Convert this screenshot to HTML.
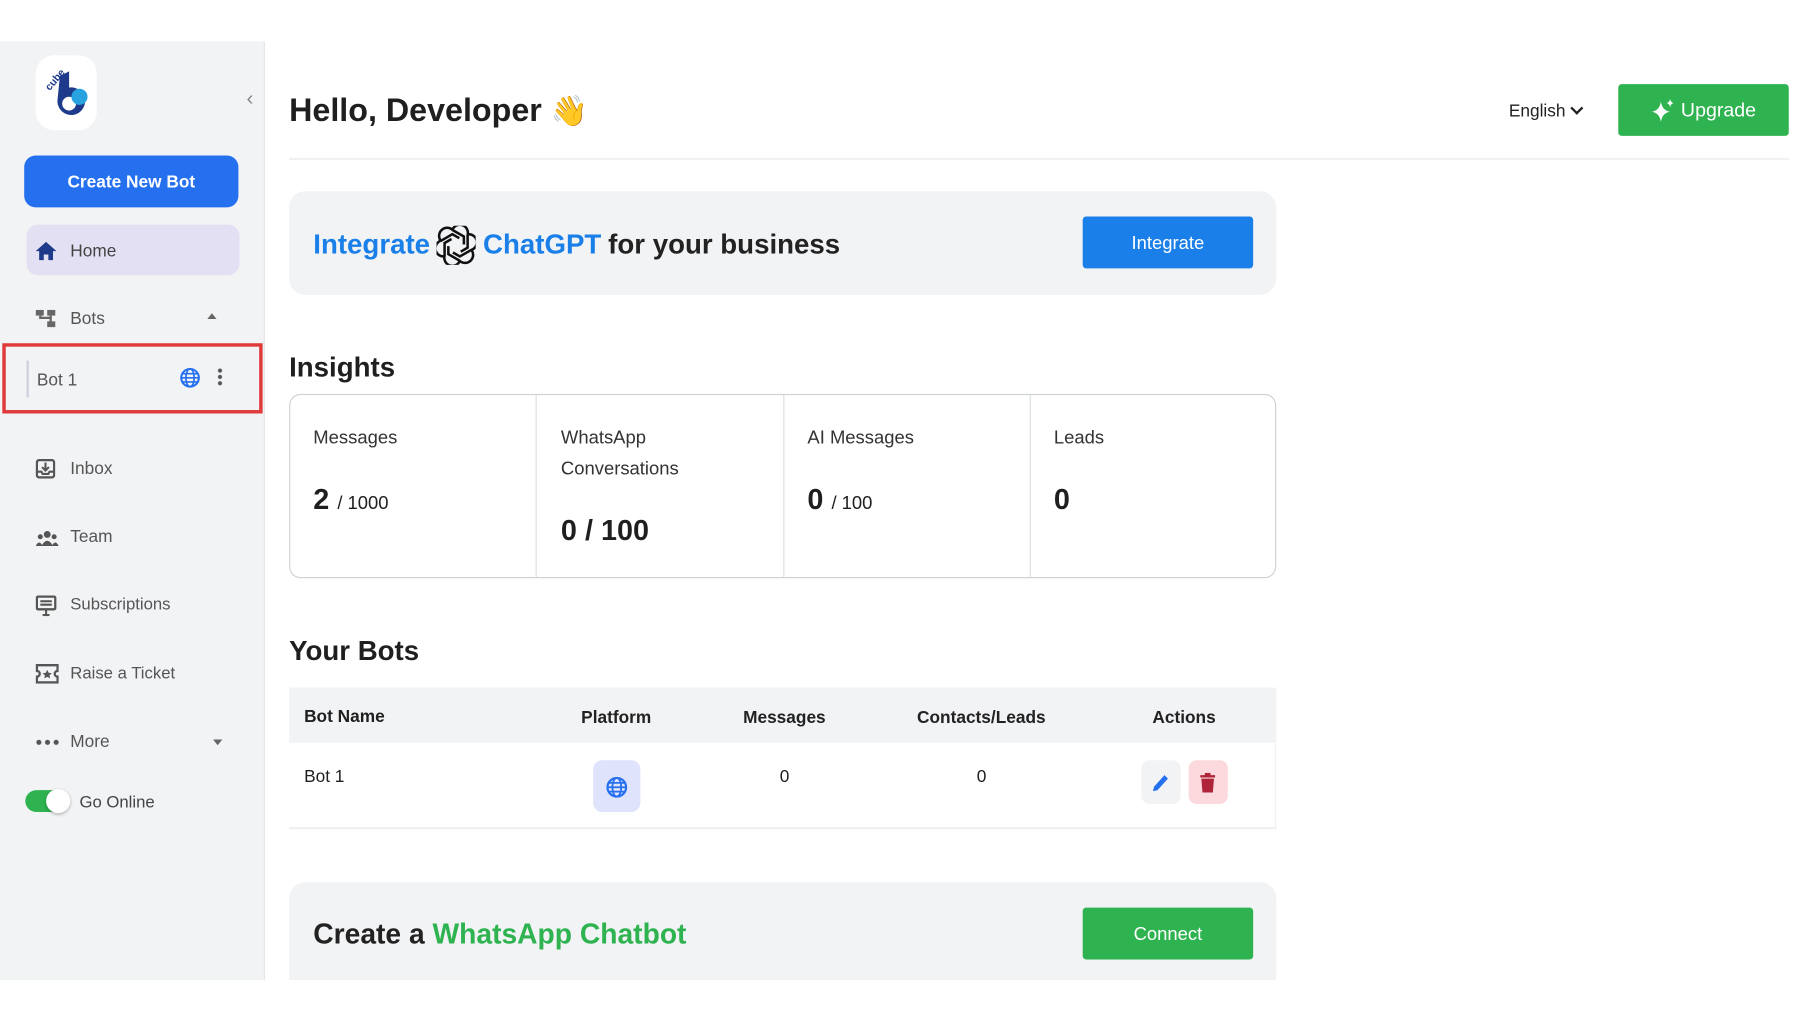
<!DOCTYPE html>
<html><head><meta charset="utf-8"><style>
*{margin:0;padding:0;box-sizing:border-box}
html,body{width:1806px;height:1020px;overflow:hidden;background:#fff;font-family:"Liberation Sans",sans-serif;color:#1f1f1f}
#w{position:absolute;left:0;top:0;width:1568px;height:886px;transform:scale(1.1518);transform-origin:0 0}
.a{position:absolute}
.side{left:0;top:36px;width:230px;height:815px;background:#f2f3f5;border-right:1px solid #e6e6e8}
.nav{position:absolute;left:61px;font-size:15px;color:#555;transform:translateY(-50%)}
.ic{position:absolute;left:31px;transform:translateY(-50%)}
.h2{font-size:25px;font-weight:bold;color:#1f1f1f}
.lbl{font-size:16px;color:#333}
.th{position:absolute;top:622px;font-size:15px;font-weight:bold;color:#222;transform:translate(-50%,-50%)}
</style></head><body><div id="w">
<div class="a side"></div>
<div class="a" style="left:31px;top:48px;width:53px;height:65px;background:#fff;border-radius:16px"></div>
<svg class="a" style="left:36px;top:56px" width="44" height="50" viewBox="0 0 44 50"><text x="2" y="20" font-size="9" font-weight="bold" fill="#1e3a8a" transform="rotate(-50 8 16)" font-family="Liberation Sans">cube</text><path d="M16 10 L24 6 L24 20 A12 12 0 1 1 14 30 Z" fill="#1e3a8a"/><circle cx="24" cy="34" r="6" fill="#fff"/><circle cx="33" cy="28" r="7" fill="#29a3e0"/></svg>
<div class="a" style="left:214px;top:75px;font-size:18px;color:#888">‹</div>
<div class="a" style="left:21px;top:135px;width:186px;height:45px;background:#2570ef;border-radius:10px;color:#fff;font-size:15px;font-weight:bold;display:flex;align-items:center;justify-content:center;padding-top:2px">Create New Bot</div>
<div class="a" style="left:23px;top:195px;width:185px;height:44px;background:#e4e0f3;border-radius:10px"></div>
<svg class="ic" style="top:218px" width="18" height="16" viewBox="0 0 18 16"><path d="M9 0 L18 8 H15 V16 H11 V11 H7 V16 H3 V8 H0Z" fill="#1e3a8a"/></svg>
<div class="nav" style="top:218px;color:#444">Home</div>
<svg class="ic" style="top:277px" width="18" height="16" viewBox="0 0 18 16"><rect x="0" y="0" width="7" height="5" fill="#666"/><rect x="10" y="0" width="7" height="5" fill="#666"/><rect x="10" y="10" width="7" height="5" fill="#666"/><path d="M13 5 V12 M4 5 V7 H13" stroke="#666" stroke-width="2" fill="none"/></svg>
<div class="nav" style="top:277px">Bots</div>
<div class="a" style="left:180px;top:272px;width:0;height:0;border-left:4px solid transparent;border-right:4px solid transparent;border-bottom:5px solid #666"></div>
<div class="a" style="left:2px;top:298px;width:226px;height:61px;border:3px solid #e03a3a"></div>
<div class="a" style="left:23px;top:313px;width:2px;height:32px;background:#cdd2de"></div>
<div class="nav" style="left:32px;top:330px">Bot 1</div>
<svg class="a" style="left:156px;top:319px" width="18" height="18" viewBox="0 0 20 20"><circle cx="10" cy="10" r="8.5" fill="none" stroke="#2570ef" stroke-width="2"/><ellipse cx="10" cy="10" rx="4" ry="8.5" fill="none" stroke="#2570ef" stroke-width="1.6"/><path d="M1.5 10H18.5M3 6H17M3 14H17" stroke="#2570ef" stroke-width="1.6"/></svg>
<div class="a" style="left:189px;top:319px;width:4px;height:16px;background:radial-gradient(circle,#555 1.6px,transparent 2px) 0 0/4px 5.5px"></div>
<svg class="ic" style="top:407px" width="17" height="17" viewBox="0 0 17 17"><rect x="1" y="1" width="15" height="15" rx="2" fill="none" stroke="#555" stroke-width="2"/><path d="M8.5 3V10M5.5 7L8.5 10L11.5 7M1 11H5L6 13H11L12 11H16" stroke="#555" stroke-width="1.8" fill="none"/></svg>
<div class="nav" style="top:407px">Inbox</div>
<svg class="ic" style="top:467px" width="20" height="14" viewBox="0 0 20 14"><circle cx="10" cy="4" r="3" fill="#555"/><circle cx="4" cy="6" r="2.2" fill="#555"/><circle cx="16" cy="6" r="2.2" fill="#555"/><path d="M5 14Q10 5 15 14Z M0 14Q3 8 6 14Z M14 14Q17 8 20 14Z" fill="#555"/></svg>
<div class="nav" style="top:466px">Team</div>
<svg class="ic" style="top:526px" width="18" height="18" viewBox="0 0 18 18"><rect x="1" y="1" width="16" height="11" rx="1" fill="none" stroke="#555" stroke-width="2"/><path d="M6 17H12M9 12V17M4 5H14M4 8H14" stroke="#555" stroke-width="1.8"/></svg>
<div class="nav" style="top:525px;font-size:14.5px">Subscriptions</div>
<svg class="ic" style="top:585px" width="20" height="17" viewBox="0 0 20 17"><path d="M1 1H19V6A2.5 2.5 0 0 0 19 11V16H1V11A2.5 2.5 0 0 0 1 6Z" fill="none" stroke="#555" stroke-width="2"/><path d="M10 5L11.2 7.6L14 8L12 9.8L12.5 12.5L10 11.2L7.5 12.5L8 9.8L6 8L8.8 7.6Z" fill="#555"/></svg>
<div class="nav" style="top:585px;font-size:14.5px">Raise a Ticket</div>
<div class="a" style="left:30px;top:642px;width:22px;height:5px;background:radial-gradient(circle,#555 2px,transparent 2.4px) 0 0/7.5px 5px"></div>
<div class="nav" style="top:644px">More</div>
<div class="a" style="left:185px;top:642px;width:0;height:0;border-left:4px solid transparent;border-right:4px solid transparent;border-top:5px solid #666"></div>
<div class="a" style="left:22px;top:686px;width:37px;height:19px;background:#2eb350;border-radius:10px"></div>
<div class="a" style="left:40px;top:685px;width:21px;height:21px;background:#fff;border-radius:50%;box-shadow:0 1px 3px rgba(0,0,0,.3)"></div>
<div class="nav" style="left:69px;top:697px;color:#444;font-size:14.5px">Go Online</div>

<div class="a" style="left:251px;top:80px;font-size:28px;font-weight:bold;color:#1f1f1f">Hello, Developer <span style="font-size:26px">👋</span></div>
<div class="a" style="left:1310px;top:88px;font-size:15px;color:#222">English <span style="display:inline-block;width:8px;height:8px;border-right:2px solid #222;border-bottom:2px solid #222;transform:rotate(45deg);margin:0 0 3px 2px"></span></div>
<div class="a" style="left:1405px;top:73px;width:148px;height:45px;background:#2eb350;border-radius:3px;color:#fff;font-size:17px;display:flex;align-items:center;justify-content:center;gap:4px"><svg width="22" height="22" viewBox="0 0 22 22"><path d="M9 3Q10 11 17 12Q10 13 9 21Q8 13 1 12Q8 11 9 3Z M17 1Q17.5 4 20 4.5Q17.5 5 17 8Q16.5 5 14 4.5Q16.5 4 17 1Z" fill="#fff"/></svg>Upgrade</div>
<div class="a" style="left:251px;top:137px;width:1302px;height:2px;background:#f0f1f3"></div>

<div class="a" style="left:251px;top:166px;width:857px;height:90px;background:#f2f3f5;border-radius:14px"></div>
<div class="a" style="left:272px;top:196px;font-size:24px;font-weight:bold;color:#222;display:flex;align-items:center;gap:6px"><span style="color:#1a7fe8">Integrate</span><svg width="34" height="34" viewBox="0 0 34 34" fill="none" stroke="#111" stroke-width="2.2"><g transform="translate(17 17)"><path id="p" d="M-3 -14 A7 7 0 0 1 10 -9 L10 2 L4 5.5"/><use href="#p" transform="rotate(60)"/><use href="#p" transform="rotate(120)"/><use href="#p" transform="rotate(180)"/><use href="#p" transform="rotate(240)"/><use href="#p" transform="rotate(300)"/></g></svg><span style="color:#1a7fe8">ChatGPT</span> for your business</div>
<div class="a" style="left:940px;top:188px;width:148px;height:45px;background:#1a7fe8;border-radius:3px;color:#fff;font-size:16px;display:flex;align-items:center;justify-content:center;padding-top:2px">Integrate</div>

<div class="a h2" style="left:251px;top:306px;font-size:24px">Insights</div>
<div class="a" style="left:251px;top:342px;width:857px;height:160px;border:1px solid #cfd2d6;border-radius:10px"></div>
<div class="a" style="left:465px;top:343px;width:1px;height:158px;background:#dcdee2"></div>
<div class="a" style="left:680px;top:343px;width:1px;height:158px;background:#dcdee2"></div>
<div class="a" style="left:894px;top:343px;width:1px;height:158px;background:#dcdee2"></div>
<div class="a lbl" style="left:272px;top:372px">Messages</div>
<div class="a" style="left:272px;top:420px;font-size:25px;font-weight:bold">2 <span style="font-size:16px;font-weight:normal">/ 1000</span></div>
<div class="a lbl" style="left:487px;top:367px;line-height:27px">WhatsApp<br>Conversations</div>
<div class="a" style="left:487px;top:447px;font-size:25px;font-weight:bold">0 / 100</div>
<div class="a lbl" style="left:701px;top:372px">AI Messages</div>
<div class="a" style="left:701px;top:420px;font-size:25px;font-weight:bold">0 <span style="font-size:16px;font-weight:normal">/ 100</span></div>
<div class="a lbl" style="left:915px;top:372px">Leads</div>
<div class="a" style="left:915px;top:420px;font-size:25px;font-weight:bold">0</div>

<div class="a h2" style="left:251px;top:552px;font-size:24px">Your Bots</div>
<div class="a" style="left:251px;top:597px;width:857px;height:48px;background:#f2f3f5"></div>
<div class="a" style="left:251px;top:645px;width:857px;height:75px;background:#fff;border-bottom:2px solid #eef0f2;border-right:1px solid #f0f0f0"></div>
<div class="a" style="left:264px;top:614px;font-size:15px;font-weight:bold">Bot Name</div>
<div class="th" style="left:535px;top:623px">Platform</div>
<div class="th" style="left:681px;top:623px">Messages</div>
<div class="th" style="left:852px;top:623px">Contacts/Leads</div>
<div class="th" style="left:1028px;top:623px">Actions</div>
<div class="a" style="left:264px;top:666px;font-size:15px">Bot 1</div>
<div class="a" style="left:677px;top:666px;font-size:15px">0</div>
<div class="a" style="left:848px;top:666px;font-size:15px">0</div>
<div class="a" style="left:515px;top:660px;width:41px;height:45px;background:#dfe3fb;border-radius:8px"></div>
<svg class="a" style="left:526px;top:674px" width="19" height="19" viewBox="0 0 20 20"><circle cx="10" cy="10" r="8.5" fill="none" stroke="#2570ef" stroke-width="2"/><ellipse cx="10" cy="10" rx="4" ry="8.5" fill="none" stroke="#2570ef" stroke-width="1.6"/><path d="M1.5 10H18.5M3 6H17M3 14H17" stroke="#2570ef" stroke-width="1.6"/></svg>
<div class="a" style="left:991px;top:660px;width:34px;height:38px;background:#f2f3f5;border-radius:7px"></div>
<svg class="a" style="left:1000px;top:671px" width="16" height="17" viewBox="0 0 16 17"><path d="M1 16L2 12L11 2L14 5L5 15Z" fill="#2570ef"/></svg>
<div class="a" style="left:1032px;top:660px;width:34px;height:38px;background:#fbd9dd;border-radius:7px"></div>
<svg class="a" style="left:1042px;top:671px" width="13" height="17" viewBox="0 0 13 17"><path d="M4 0H9V2H13V4H0V2H4Z M1 5H12L11 17H2Z" fill="#b0243a"/></svg>

<div class="a" style="left:251px;top:766px;width:857px;height:85px;background:#f2f3f5;border-radius:14px 14px 0 0"></div>
<div class="a" style="left:272px;top:798px;font-size:24.5px;font-weight:bold;color:#222">Create a <span style="color:#2eb350">WhatsApp Chatbot</span></div>
<div class="a" style="left:940px;top:788px;width:148px;height:45px;background:#2eb350;border-radius:3px;color:#fff;font-size:16px;display:flex;align-items:center;justify-content:center;padding-top:2px">Connect</div>
</div></body></html>
